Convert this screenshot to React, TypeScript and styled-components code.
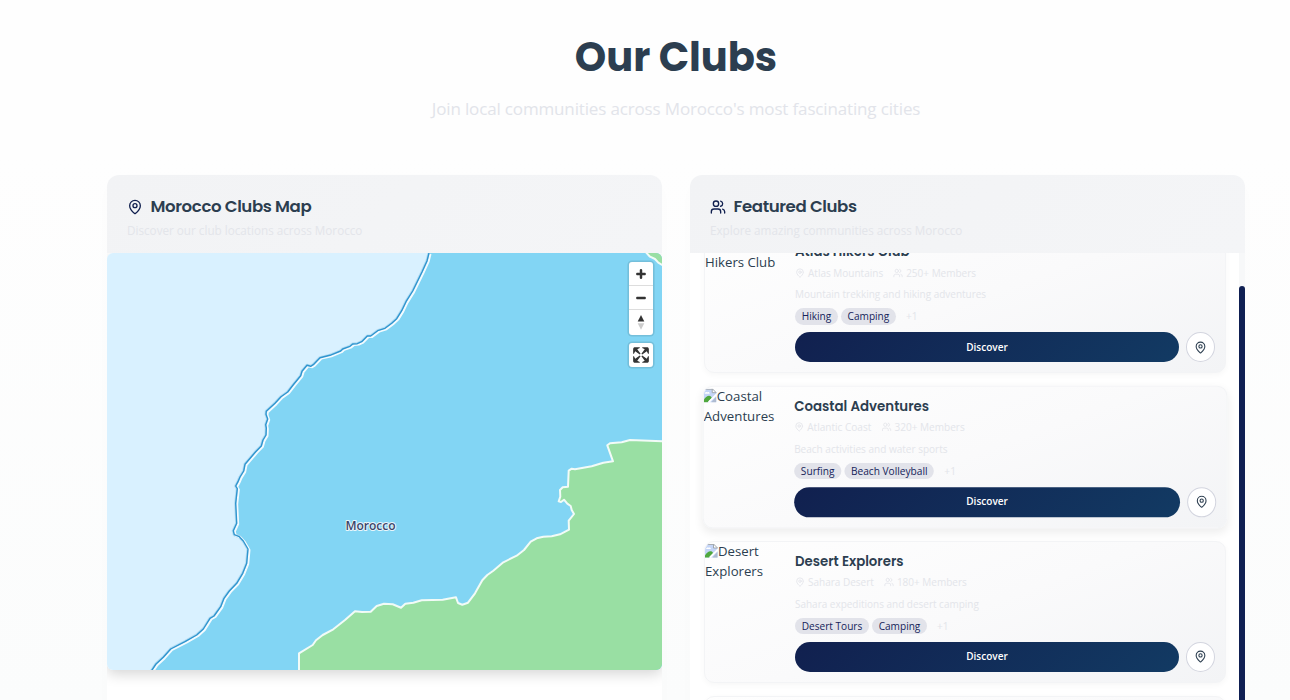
import React from 'react';
import styled, { createGlobalStyle, css } from 'styled-components';
import { MapPin, Users } from 'lucide-react';

const GlobalStyle = createGlobalStyle`
  *, *::before, *::after { box-sizing: border-box; }
  html, body { margin: 0; padding: 0; }
  body {
    height: 700px;
    overflow: hidden;
    font-family: 'Open Sans', 'Noto Sans', sans-serif;
    color: #2c3e50;
    background: #fefefe;
  }
`;

const headingFont = css`
  font-family: Poppins, Inter, sans-serif;
`;

const Page = styled.main`
  height: 700px;
  overflow: hidden;
  padding: 0 45px 0 107px;
  background: linear-gradient(180deg, #fefefe 0%, #fefefe 22%, #fbfcfc 100%);
`;

const Hero = styled.header`
  height: 175px;
  padding-top: 27px;
  text-align: center;
`;

const HeroTitle = styled.h1`
  ${headingFont}
  margin: 0;
  font-size: 40px;
  line-height: 60px;
  font-weight: 700;
  letter-spacing: -0.05px;
`;

const HeroText = styled.p`
  margin: 9px 0 0;
  font-size: 17px;
  line-height: 26px;
  letter-spacing: -0.15px;
  color: #e2e4ea;
`;

const Columns = styled.div`
  display: grid;
  grid-template-columns: 555px 555px;
  gap: 28px;
`;

const Panel = styled.section`
  height: 560px;
  background: #fff;
  border-radius: 12px;
  overflow: hidden;
  box-shadow: 0 4px 24px rgba(20, 40, 90, 0.01);
`;

const PanelHeader = styled.div`
  position: relative;
  z-index: 1;
  height: 78px;
  padding: 20px 20px 0;
  background: linear-gradient(135deg, #f2f3f5, #f4f5f7);
`;

const PanelTitle = styled.h2`
  ${headingFont}
  display: flex;
  align-items: center;
  gap: 7.5px;
  margin: 0;
  height: 23px;
  font-size: 16.6px;
  font-weight: 600;
  letter-spacing: -0.38px;

  svg { color: #11204f; }
`;

const PanelText = styled.p`
  margin: 4px 0 0;
  font-size: 11.7px;
  line-height: 16px;
  color: #e3e5ea;
`;

const MapView = styled.div`
  position: relative;
  height: 417px;
  border-radius: 6px;
  overflow: hidden;
  background: #d9f1ff;
`;

const MapShadow = styled.div`
  border-radius: 6px;
  box-shadow: 0 4px 14px rgba(0, 0, 0, 0.17);
`;

const MapCanvas = styled.svg`
  display: block;
`;

const Controls = styled.div`
  position: absolute;
  top: 9px;
  right: 9px;
  display: flex;
  flex-direction: column;
  gap: 8px;
`;

const ControlGroup = styled.div`
  width: 24px;
  border-radius: 3px;
  background: #fff;
  box-shadow: 0 0 0 1.6px rgba(0, 0, 0, 0.1);
`;

const ControlButton = styled.button`
  display: block;
  width: 24px;
  height: 24.2px;
  padding: 0;
  border: 0;
  background: transparent;

  & + & { box-shadow: 0 -1px 0 #ddd; }
  svg { display: block; }
`;

const ListView = styled.div`
  display: flex;
  height: 482px;
  overflow: hidden;
`;

const ClubList = styled.div`
  flex: 1;
  display: flex;
  flex-direction: column;
  gap: 13px;
  padding: 0 13px 0 14px;
  margin-top: -21.6px;
`;

const ScrollTrack = styled.div`
  width: 6px;
  background: #f7f8f9;
  padding-top: 33px;
`;

const ScrollThumb = styled.div`
  height: 500px;
  border-radius: 3px;
  background: #0f1f52;
`;

const Card = styled.article<{ $raised?: boolean }>`
  flex: none;
  display: flex;
  height: 141.8px;
  border: 1px solid #f3f4f6;
  border-radius: 10px;
  overflow: hidden;
  background: linear-gradient(160deg, #fefefe 0%, #fafafb 50%, #f3f4f6 100%);
  box-shadow: ${p => (p.$raised ? '0 4px 10px rgba(0,0,0,0.07)' : '0 2px 6px rgba(0,0,0,0.035)')};
  transform: ${p => (p.$raised ? 'scale(1.005)' : 'none')};
`;

const Thumb = styled.div`
  width: 80px;
  margin-top: -0.6px;
  font-size: 13.2px;
  line-height: 20px;

  svg { display: inline-block; vertical-align: -2px; width: 13px; }
`;

const CardBody = styled.div`
  flex: 1;
  display: flex;
  flex-direction: column;
  padding: 10px 10px 10px;
`;

const CardTitle = styled.h3`
  ${headingFont}
  margin: 0;
  font-size: 13.3px;
  line-height: 20px;
  font-weight: 600;
`;

const Meta = styled.div`
  display: flex;
  gap: 10px;
  margin-top: 2.6px;
  height: 15px;
  font-size: 10px;
  font-weight: 500;
  color: #e3e5ea;
`;

const MetaItem = styled.span`
  display: flex;
  align-items: center;
  gap: 3px;
`;

const Description = styled.p`
  margin: 7.4px 0 0;
  font-size: 9.97px;
  line-height: 15px;
  font-weight: 500;
  color: #e3e5ea;
`;

const Tags = styled.div`
  display: flex;
  align-items: center;
  gap: 3px;
  margin-top: 5.5px;
  height: 17px;
  font-size: 10.1px;
  font-weight: 500;
`;

const Tag = styled.span`
  height: 16.500px;
  line-height: 16px;
  padding: 0 6.7px;
  border-radius: 9px;
  background: #e2e3ea;
  color: #16235a;
`;

const More = styled.span`
  padding-left: 7px;
  color: #e3e5ea;
`;

const Actions = styled.div`
  display: flex;
  align-items: center;
  gap: 7px;
  margin-top: auto;
`;

const Discover = styled.button`
  flex: 1;
  height: 30px;
  padding: 0 0 1px;
  border: 0;
  border-radius: 15px;
  background: linear-gradient(135deg, #11204f, #123a63);
  color: #fff;
  font: 650 10px 'Open Sans', sans-serif;
`;

const PinButton = styled.button`
  display: grid;
  place-items: center;
  width: 29px;
  height: 30px;
  padding: 0;
  border: 1px solid #d3d5df;
  border-radius: 50%;
  background: #fff;
  color: #2c3e50;
`;

const BrokenImage = () => (
  <svg width="13" height="14" viewBox="0 0 13 14">
    <path d="M0 0h8.500l4 4v9.500H0z" fill="#c4d5f7" />
    <path d="M8.500 0v4h4z" fill="#fff" stroke="#98a0a6" strokeWidth=".9" />
    <path d="M0 .5h8.500" stroke="#a8adb2" />
    <path d="M1 5c.3-1.500 1.600-2 2.500-1.300C4.700 3 6 3.800 5.900 5z" fill="#fff" />
    <path d="M0 11.500C1.500 8.500 4 6.800 6 7.200c1.300.2 1.800 1 2 2L4 13.500H0z" fill="#4fa83d" />
    <path d="M13 5.500L5 13.500" stroke="#fff" strokeWidth="1.800" />
    <path d="M12.500 8v5.500H7.500z" fill="#aebbd0" />
  </svg>
);

const coast =
  'M322 0L320 8L315 19L305.700 38L299 48.700L294.700 57.700L289.700 65.700L284.700 70.300L278 75.300L270.700 77.700L263.700 83L260.300 83L254.700 88.700L250.300 90.700L245.700 91L243 93.300L235.700 96L233.700 98L223 102.300L213 104.700L206.300 111.700L203.700 113.300L200 112.300L195 118.300L193.700 122.700L186.300 131.700L180.700 139L174 143.700L168 150.300L159.300 158.300L159 161.300L160.700 166L158.700 171.700L159.300 175L159 182L156 187L154.300 193L148.700 198.700L138 211.300L136.700 218L133 224L131 228.700L128.700 233L130.300 235.700L128.700 250.300L129.700 270.300L126.300 277.700L127.300 281.700L132.300 283.700L136.300 288L141 296L139.700 310.300L135.700 320.300L129.700 330.300L122.300 338L117 345.300L113.700 353.700L107 363L103 365.300L96.300 376L89.700 382L78 388.700L63.700 396L56.300 404.300L49 411L44.300 418';

const border =
  'M192 418L192 400.300L205.700 392L209 387.300L215.700 382L226.300 376.300L238 367L248 358.300L255 359L263.700 358.700L269.700 353L277 350.700L285.700 351.300L294 354.700L298.300 350.700L306.300 349.700L314.700 347.300L335.700 346.700L349 344.300L351 350L355.300 351.700L361 349.700L368 340.300L375.300 327.300L380.300 322L386.300 317.700L396.300 309.300L409.700 302.700L417 297L423.700 288.700L429.700 285.300L436.300 283.700L444.700 283.300L453 281.300L462 276.700L461.700 267.700L467 261L464.700 257L463.700 253L460.300 250.700L457 246.700L454 249L451.700 248.300L453.300 243.700L453 237L455.700 234.300L461 233.700L461.700 217.700L464.700 215.700L468 216.300L484.700 213.300L496.300 209.700L506 208.300L500.300 192.300L503 190.300L514.700 189.300L523 187L556 188.300';

const north = 'M538.700 -1L543 3.700L548 6L551.300 9.700L556 12.500';

const ControlIcon = ({ children }: { children: React.ReactNode }) => (
  <svg width="24" height="24" viewBox="0 0 29 29" fill="#333">{children}</svg>
);

const MoroccoMap = () => (
  <MapShadow>
    <MapView>
      <MapCanvas width="555" height="417" viewBox="0 0 555 417" strokeLinejoin="round">
        <path d={`${coast}H555V0Z`} fill="#82d5f4" />
        <path d={`${border}V418Z`} fill="#99dfa3" />
        <path d={`${north}V-1Z`} fill="#99dfa3" />
        <path d={border} fill="none" stroke="#f2fbf7" strokeWidth="2" />
        <path d={north} fill="none" stroke="#f2fbf7" strokeWidth="2" />
        <path d={coast} fill="none" stroke="#b3dcf2" strokeWidth="3.200" />
        <path d={coast} transform="translate(1.500 .9)" fill="none" stroke="#f3fbff" strokeWidth="2" />
        <path d={coast} fill="none" stroke="#2f95cf" strokeWidth="1.400" />
        <text
          x="263.500"
          y="276.500"
          textAnchor="middle"
          fontFamily="'Open Sans', sans-serif"
          fontSize="12"
          fontWeight="600"
          fill="#3b4468"
          stroke="#e8f5fb"
          strokeWidth="2"
          paintOrder="stroke"
        >
          Morocco
        </text>
      </MapCanvas>
      <Controls>
        <ControlGroup>
          <ControlButton aria-label="Zoom in">
            <ControlIcon>
              <path d="M14.500 8.500c-.75 0-1.500.75-1.500 1.500v3h-3c-.75 0-1.500.75-1.500 1.500S9.250 16 10 16h3v3c0 .75.75 1.500 1.500 1.500S16 19.750 16 19v-3h3c.75 0 1.500-.75 1.500-1.500S19.750 13 19 13h-3v-3c0-.75-.75-1.500-1.500-1.500z" />
            </ControlIcon>
          </ControlButton>
          <ControlButton aria-label="Zoom out">
            <ControlIcon>
              <path d="M10 13c-.75 0-1.500.75-1.500 1.500S9.250 16 10 16h9c.75 0 1.500-.75 1.500-1.500S19.750 13 19 13h-9z" />
            </ControlIcon>
          </ControlButton>
          <ControlButton aria-label="Reset bearing">
            <ControlIcon>
              <path d="M10.500 14l4-8 4 8h-8z" />
              <path d="M10.500 16l4 8 4-8h-8z" fill="#ccc" />
            </ControlIcon>
          </ControlButton>
        </ControlGroup>
        <ControlGroup>
          <ControlButton aria-label="Fullscreen">
            <ControlIcon>
              <path d="M24 16v5.500c0 1.750-.75 2.500-2.500 2.500H16v-1l3-1.500-4-5.500 1-1 5.500 4 1.500-3h1zM6 16l1.500 3 5.500-4 1 1-4 5.500 3 1.500v1H7.500C5.750 24 5 23.250 5 21.500V16h1zm7-11v1l-3 1.500 4 5.500-1 1-5.500-4L6 13H5V7.500C5 5.750 5.750 5 7.500 5H13zm11 2.500c0-1.750-.75-2.500-2.500-2.500H16v1l3 1.500-4 5.500 1 1 5.500-4 1.500 3h1V7.500z" />
            </ControlIcon>
          </ControlButton>
        </ControlGroup>
      </Controls>
    </MapView>
  </MapShadow>
);

interface Club {
  name: string;
  place: string;
  members: string;
  text: string;
  tags: string[];
  raised?: boolean;
}

const clubs: Club[] = [
  { name: 'Atlas Hikers Club', place: 'Atlas Mountains', members: '250+ Members', text: 'Mountain trekking and hiking adventures', tags: ['Hiking', 'Camping'] },
  { name: 'Coastal Adventures', place: 'Atlantic Coast', members: '320+ Members', text: 'Beach activities and water sports', tags: ['Surfing', 'Beach Volleyball'], raised: true },
  { name: 'Desert Explorers', place: 'Sahara Desert', members: '180+ Members', text: 'Sahara expeditions and desert camping', tags: ['Desert Tours', 'Camping'] },
];

const ClubCard = ({ club }: { club: Club }) => (
  <Card $raised={club.raised}>
    <Thumb><BrokenImage />{club.name}</Thumb>
    <CardBody>
      <CardTitle>{club.name}</CardTitle>
      <Meta>
        <MetaItem><MapPin size={10} />{club.place}</MetaItem>
        <MetaItem><Users size={10} />{club.members}</MetaItem>
      </Meta>
      <Description>{club.text}</Description>
      <Tags>
        {club.tags.map(t => <Tag key={t}>{t}</Tag>)}
        <More>+1</More>
      </Tags>
      <Actions>
        <Discover>Discover</Discover>
        <PinButton aria-label="Show on map"><MapPin size={13} /></PinButton>
      </Actions>
    </CardBody>
  </Card>
);

export default function App() {
  return (
    <Page>
      <GlobalStyle />
      <Hero>
        <HeroTitle>Our Clubs</HeroTitle>
        <HeroText>Join local communities across Morocco's most fascinating cities</HeroText>
      </Hero>
      <Columns>
        <Panel>
          <PanelHeader>
            <PanelTitle><MapPin size={16} />Morocco Clubs Map</PanelTitle>
            <PanelText>Discover our club locations across Morocco</PanelText>
          </PanelHeader>
          <MoroccoMap />
        </Panel>
        <Panel>
          <PanelHeader>
            <PanelTitle><Users size={16} />Featured Clubs</PanelTitle>
            <PanelText>Explore amazing communities across Morocco</PanelText>
          </PanelHeader>
          <ListView>
            <ClubList>
              {clubs.map(c => <ClubCard key={c.name} club={c} />)}
              <Card />
            </ClubList>
            <ScrollTrack><ScrollThumb /></ScrollTrack>
          </ListView>
        </Panel>
      </Columns>
    </Page>
  );
}
